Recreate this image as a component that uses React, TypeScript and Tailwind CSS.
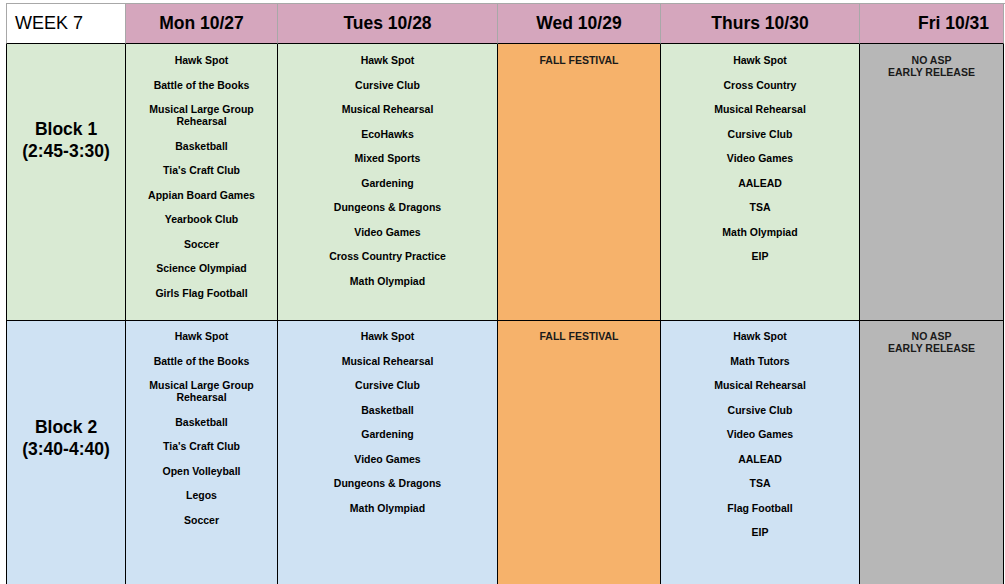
const days = [
  { label: "Mon 10/27" },
  { label: "Tues 10/28" },
  { label: "Wed 10/29" },
  { label: "Thurs 10/30" },
  { label: "Fri 10/31" },
];

const colWidths = ["w-[152px]", "w-[220px]", "w-[163px]", "w-[199px]", "w-[144px]"];

const blocks = [
  {
    name: "Block 1",
    time: "(2:45-3:30)",
    bg: "bg-[#d9ead3]",
    height: "h-[277px]",
    labelPad: "pt-[74px]",
    listPad: "pt-[10px]",
    mon: [
      "Hawk Spot",
      "Battle of the Books",
      "Musical Large Group Rehearsal",
      "Basketball",
      "Tia's Craft Club",
      "Appian Board Games",
      "Yearbook Club",
      "Soccer",
      "Science Olympiad",
      "Girls Flag Football",
    ],
    tues: [
      "Hawk Spot",
      "Cursive Club",
      "Musical Rehearsal",
      "EcoHawks",
      "Mixed Sports",
      "Gardening",
      "Dungeons & Dragons",
      "Video Games",
      "Cross Country Practice",
      "Math Olympiad",
    ],
    thurs: [
      "Hawk Spot",
      "Cross Country",
      "Musical Rehearsal",
      "Cursive Club",
      "Video Games",
      "AALEAD",
      "TSA",
      "Math Olympiad",
      "EIP",
    ],
  },
  {
    name: "Block 2",
    time: "(3:40-4:40)",
    bg: "bg-[#cfe2f3]",
    height: "h-[280px]",
    labelPad: "pt-[95px]",
    listPad: "pt-[9px]",
    mon: [
      "Hawk Spot",
      "Battle of the Books",
      "Musical Large Group Rehearsal",
      "Basketball",
      "Tia's Craft Club",
      "Open Volleyball",
      "Legos",
      "Soccer",
    ],
    tues: [
      "Hawk Spot",
      "Musical Rehearsal",
      "Cursive Club",
      "Basketball",
      "Gardening",
      "Video Games",
      "Dungeons & Dragons",
      "Math Olympiad",
    ],
    thurs: [
      "Hawk Spot",
      "Math Tutors",
      "Musical Rehearsal",
      "Cursive Club",
      "Video Games",
      "AALEAD",
      "TSA",
      "Flag Football",
      "EIP",
    ],
  },
];

function ActivityList({ items }: { items: string[] }) {
  return (
    <div className="flex flex-col gap-[12.25px] px-1 text-center text-[10.5px] font-bold leading-[12.25px] text-black">
      {items.map((item, i) => (
        <div key={i}>{item}</div>
      ))}
    </div>
  );
}

export default function App() {
  return (
    <div className="h-[584px] w-[1005px] overflow-hidden bg-white font-['Liberation_Sans',Arial,sans-serif]">
      <div className="ml-[6px] mt-[3px] flex flex-col">
        {/* header row */}
        <div className="flex border-t border-[#a8a8a8]">
          <div className="flex h-[40px] w-[120px] items-center border-b border-l border-r border-b-black border-[#a8a8a8] bg-white pl-[8px] text-[18px] text-black">
            WEEK 7
          </div>
          {days.map((d, i) => (
            <div
              key={d.label}
              className={`flex h-[40px] ${colWidths[i]} items-center border-b border-r border-b-black border-[#a8a8a8] bg-[#d5a6bd] text-[17.5px] font-bold text-black ${
                i === 4 ? "justify-end pr-[14px]" : "justify-center"
              }`}
            >
              {d.label}
            </div>
          ))}
        </div>

        {blocks.map((b) => (
          <div key={b.name} className="flex">
            <div
              className={`${b.height} w-[120px] border-b border-l border-r border-black ${b.bg} ${b.labelPad} text-center text-[17.5px] font-bold leading-[22px] text-black`}
            >
              <div>{b.name}</div>
              <div>{b.time}</div>
            </div>
            <div className={`${b.height} ${colWidths[0]} border-b border-r border-black ${b.bg} ${b.listPad}`}>
              <ActivityList items={b.mon} />
            </div>
            <div className={`${b.height} ${colWidths[1]} border-b border-r border-black ${b.bg} ${b.listPad}`}>
              <ActivityList items={b.tues} />
            </div>
            <div className={`${b.height} ${colWidths[2]} border-b border-r border-black bg-[#f6b26b] ${b.listPad}`}>
              <div className="text-center text-[10.5px] font-bold leading-[12.25px] text-[#1a1a1a]">FALL FESTIVAL</div>
            </div>
            <div className={`${b.height} ${colWidths[3]} border-b border-r border-black ${b.bg} ${b.listPad}`}>
              <ActivityList items={b.thurs} />
            </div>
            <div className={`${b.height} ${colWidths[4]} border-b border-r border-black bg-[#b7b7b7] ${b.listPad}`}>
              <div className="text-center text-[10.5px] font-bold leading-[12.25px] text-[#1a1a1a]">
                <div>NO ASP</div>
                <div>EARLY RELEASE</div>
              </div>
            </div>
          </div>
        ))}
      </div>
    </div>
  );
}
